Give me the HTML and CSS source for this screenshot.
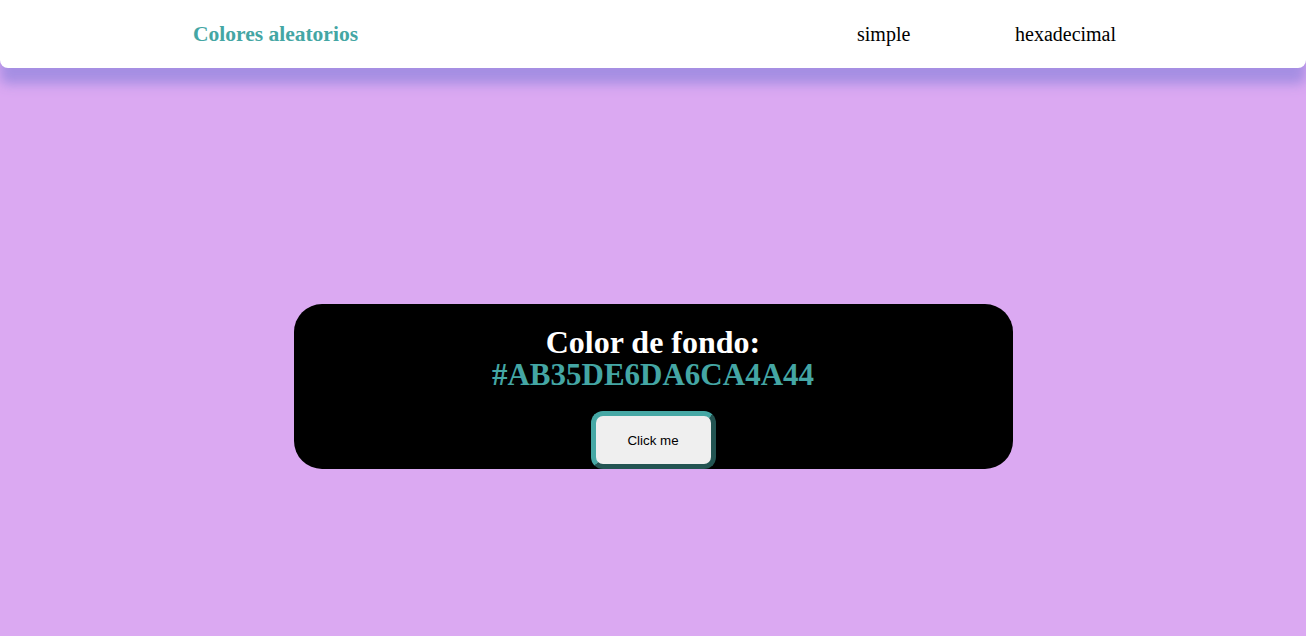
FILE: index.html
```html
<!DOCTYPE html>
<html lang="es">
<head>
<meta charset="utf-8">
<title>Colores aleatorios</title>
<link rel="stylesheet" href="styles.css">
</head>
<body>
<header class="topbar">
  <div class="brand">Colores aleatorios</div>
  <nav class="nav">
    <a class="nav-link nav-simple" href="#">simple</a>
    <a class="nav-link" href="#">hexadecimal</a>
  </nav>
</header>
<main class="stage">
  <section class="card">
    <h2 class="card-title">Color de fondo: <span class="hex">#AB35DE6DA6CA4A44</span></h2>
    <button class="btn">Click me</button>
  </section>
</main>
</body>
</html>
```
FILE: styles.css
```css
html, body {
  margin: 0;
  padding: 0;
}
body {
  background: #dba9f2;
  font-family: "Liberation Serif", "Times New Roman", serif;
  height: 636px;
  overflow: hidden;
}
.topbar {
  height: 68px;
  background: #ffffff;
  border-radius: 0 0 8px 8px;
  box-shadow: 0 16px 12px rgba(160, 140, 225, 0.9);
  display: flex;
  align-items: center;
  padding-left: 193px;
  position: relative;
  z-index: 1;
}
.brand {
  color: #44a6a4;
  font-weight: bold;
  font-size: 21.5px;
  width: 664px;
}
.nav {
  display: flex;
}
.nav-link {
  color: #000;
  text-decoration: none;
  font-size: 20px;
}
.nav-simple {
  width: 158px;
}
.stage {
  display: flex;
  justify-content: center;
  padding-top: 236px;
}
.card {
  width: 719px;
  height: 165px;
  box-sizing: border-box;
  background: #000;
  border-radius: 28px;
  display: flex;
  flex-direction: column;
  align-items: center;
  padding-top: 22px;
}
.card-title {
  margin: 0;
  color: #fff;
  font-size: 32px;
  line-height: 32px;
  text-align: center;
  font-weight: bold;
  width: 340px;
}
.hex {
  color: #44a6a4;
  font-size: 31px;
}
.btn {
  margin-top: 20px;
  width: 125px;
  height: 58px;
  border: 5px outset #46a8a5;
  border-radius: 12px;
  background: #efefef;
  font-family: "Liberation Sans", Arial, sans-serif;
  font-size: 13.33px;
  color: #000;
}
```
